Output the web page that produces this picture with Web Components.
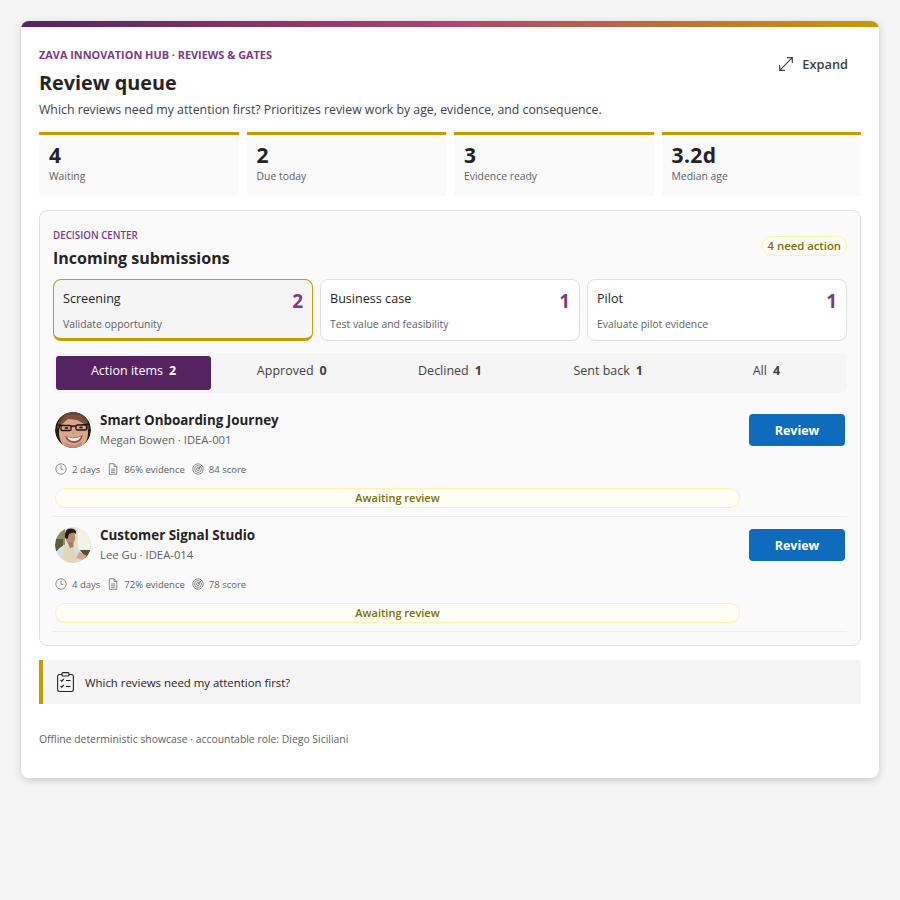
<!DOCTYPE html>
<html lang="en"><head><meta charset="utf-8"><title>Review queue</title>
<style>
html,body{margin:0;padding:0;background:#f5f5f5;}
body{font-family:"Open Sans","Noto Sans",sans-serif;color:#242424;}
</style></head><body>
<review-app></review-app>
<script>
const FONT='"Open Sans","Noto Sans",sans-serif';
const icons={
clock:'<svg width="12" height="12" viewBox="0 0 12 12" fill="none" stroke="#707070" stroke-width=".8"><circle cx="6" cy="6" r="5.2"/><path d="M6 2.800V6.300H8.400"/></svg>',
doc:'<svg width="12" height="12" viewBox="0 0 12 12" fill="none" stroke="#707070" stroke-width=".8"><path d="M2.400.7H7L9.800 3.500V11.300H2.400Z"/><path d="M7 .7V3.500H9.800M4 6H8.200M4 7.700H8.200M4 9.400H8.200"/></svg>',
score:'<svg width="12" height="12" viewBox="0 0 12 12" fill="none" stroke="#707070" stroke-width=".8"><circle cx="6" cy="6" r="5.200"/><circle cx="6" cy="6" r="3.400"/><circle cx="6" cy="6" r="1.500"/><path d="M6 6 10 2"/></svg>'
};
const avatars={
megan:`<svg width="36" height="36" viewBox="0 0 36 36"><defs><clipPath id="c"><circle cx="18" cy="18" r="18"/></clipPath><filter id="b" x="-10%" y="-10%" width="120%" height="120%"><feGaussianBlur stdDeviation=".7"/></filter></defs><g clip-path="url(#c)"><rect width="36" height="36" fill="#241812"/><g filter="url(#b)"><path d="M2 18C2 6 10 0 19 0S35 6 34 18L30 11 22 6 10 7 6 12Z" fill="#6a452f"/><ellipse cx="18.500" cy="21" rx="14.500" ry="17" fill="#d9a68b"/><path d="M5 10 12 3 25 3 32 10 31 13 22 8 13 7 6 13Z" fill="#7a5238"/><path d="M10 30Q19 36 27 29V36H10Z" fill="#c68e76"/><path d="M10 24Q19 28 28 23Q26 31 19 31Q12 31 10 24Z" fill="#9c4a48"/><path d="M12 25Q19 27.500 26 24.500Q24 29 19 29Q14 29 12 25Z" fill="#f7f2ec"/><path d="M3 13 16 14.500M21 14.500 34 12M16 14.500Q18.500 13.500 21 14.500" stroke="#1f1411" stroke-width="1.400" fill="none"/><rect x="6" y="13.500" width="10" height="5" rx="1.200" fill="#d8ab92" stroke="#1f1411" stroke-width="1.300"/><rect x="21" y="13" width="10.500" height="5" rx="1.200" fill="#d8ab92" stroke="#1f1411" stroke-width="1.300"/><ellipse cx="11.500" cy="16" rx="2" ry="1.100" fill="#33201a"/><ellipse cx="26" cy="15.500" rx="2" ry="1.100" fill="#33201a"/><path d="M18 19 17 22H20Z" fill="#c99479"/></g></g></svg>`,
lee:`<svg width="36" height="36" viewBox="0 0 36 36"><defs><clipPath id="d"><circle cx="18" cy="18" r="18"/></clipPath><filter id="e" x="-10%" y="-10%" width="120%" height="120%"><feGaussianBlur stdDeviation=".6"/></filter></defs><g clip-path="url(#d)"><rect width="36" height="36" fill="#e4e0cc"/><g filter="url(#e)"><rect x="23" width="13" height="24" fill="#f4f1e6"/><rect x="0" width="10" height="18" fill="#8f8c66"/><rect x="0" y="12" width="8" height="12" fill="#5d5a3c"/><rect x="25" y="23" width="11" height="13" fill="#564d3e"/><path d="M0 36V27Q4 19 11 18L20 20Q27 23 30 31L32 36Z" fill="#d5deea"/><path d="M6 36 9 20 13 18 19 21 24 36Z" fill="#e2d6ba"/><path d="M24 25 32 29 28 33 21 31Z" fill="#d4a587"/><ellipse cx="15.500" cy="10.500" rx="4.800" ry="6.500" fill="#b98a6e"/><path d="M10 11Q9 1.500 15.500 1.500Q22 1.500 21 7L18 5.500 14 7 12.500 12Z" fill="#201d1a"/><path d="M12.500 15.500H18.500V20L15 21Z" fill="#a87a60"/></g></g></svg>`
};
function define(name,css,html){
  const t=document.createElement('template');
  t.innerHTML=`<style>:host{box-sizing:border-box;font-family:${FONT}}*{box-sizing:border-box}${css}</style>${html}`;
  customElements.define(name,class extends HTMLElement{
    constructor(){super();this.attachShadow({mode:'open'}).appendChild(t.content.cloneNode(true));}
    connectedCallback(){
      this.shadowRoot.querySelectorAll('[data-a]').forEach(n=>{n.textContent=this.getAttribute(n.dataset.a)||'';});
    }
  });
}
define('metric-tile',`:host{display:block;height:64px;background:#fafafa;border-top:3px solid #c89b00;padding:8px 10px 0}
.v{font-size:21px;line-height:24px;font-weight:700;letter-spacing:.4px;color:#242424}
.l{font-size:10.400px;line-height:15px;color:#616161;margin-top:2px}`,
`<div class="v" data-a="value"></div><div class="l" data-a="label"></div>`);
define('stage-card',`:host{display:block;height:62px;background:#fff;border:1px solid #e0e0e0;border-radius:8px;padding:10px 9px 0;position:relative}
:host([active]){background:#f5f5f5;border-color:#c89b00;border-bottom:3px solid #c89b00}
.top{display:flex;justify-content:space-between}
.n{font-size:12.600px;line-height:18px;color:#242424}
.c{font-size:19px;line-height:23px;font-weight:700;color:#7b3a86}
.s{font-size:10.400px;line-height:14px;color:#616161;position:absolute;left:9px;top:37px}`,
`<div class="top"><span class="n" data-a="name"></span><span class="c" data-a="count"></span></div><div class="s" data-a="sub"></div>`);
define('filter-tab',`:host{display:flex;align-items:center;justify-content:center;gap:6px;height:34px;padding-bottom:6px;border-radius:3px;font-size:12.500px;color:#424242}
:host([active]){background:#55235f;color:#fff}
b{font-weight:700}`,
`<span data-a="label"></span><b data-a="count"></b>`);
define('meta-item',`:host{display:inline-flex;align-items:center;gap:5px;font-size:9.500px;color:#616161}
.i{display:flex}`,`<span class="i"><slot></slot></span><span data-a="text"></span>`);
define('queue-row',`:host{display:grid;grid-template-columns:1fr 96px;column-gap:9px;height:115px;padding:10px 2px 0;border-bottom:1px solid #ededed}
.who{display:flex;gap:9px}
.av{width:36px;height:36px;border-radius:50%;overflow:hidden;flex:none}
.t{font-size:13.400px;line-height:18px;font-weight:700;color:#242424;margin-top:-1px}
.p{font-size:11.300px;line-height:16px;color:#616161;margin-top:3px}
.m{display:flex;gap:7px;margin-top:12px;height:18px;align-items:center}
.pill{margin-top:10px;height:20px;border:1px solid #fdf3a8;background:#fffef5;border-radius:10px;font-size:11px;font-weight:600;line-height:18px;text-align:center;color:#7a7100}
button{height:32px;margin-top:2px;border:0;border-radius:4px;background:#0f6cbd;color:#fff;font:700 12.500px ${FONT}}`,
`<div><div class="who"><div class="av"><slot name="avatar"></slot></div><div><div class="t" data-a="title"></div><div class="p" data-a="person"></div></div></div><div class="m"><slot></slot></div><div class="pill">Awaiting review</div></div><button>Review</button>`);
define('decision-panel',`:host{display:block;height:436px;margin-top:14px;background:#fafafa;border:1px solid #e0e0e0;border-radius:8px;padding:18px 13px 0}
.h{display:flex;justify-content:space-between;align-items:flex-start;height:50px}
.e{font-size:9.800px;line-height:13px;font-weight:600;color:#7b3a86}
.t{font-size:16px;line-height:22px;font-weight:700;margin-top:5px;color:#242424}
.b{margin-top:7px;height:20px;padding:0 5px;border:1px solid #fdf3a8;background:#fffef5;border-radius:10px;font-size:11.300px;line-height:18px;font-weight:600;color:#7a7100}
.s{display:grid;grid-template-columns:repeat(3,1fr);gap:7px}
.f{display:grid;grid-template-columns:repeat(5,1fr);gap:3px;margin-top:12px;padding:3px;height:40px;background:#f5f5f5;border-radius:6px}
.r{margin-top:9px}`,
`<div class="h"><div><div class="e">DECISION CENTER</div><div class="t">Incoming submissions</div></div><div class="b">4 need action</div></div>
<div class="s"><slot name="stages"></slot></div><div class="f"><slot name="tabs"></slot></div><div class="r"><slot></slot></div>`);
define('review-app',`:host{display:block;width:858px;height:757px;margin:21px;background:#fff;border-radius:8px;box-shadow:0 2px 8px rgba(0,0,0,.18);overflow:hidden}
.bar{height:6px;background:linear-gradient(90deg,#55235f,#b0446f 50%,#c89b00)}
.in{padding:0 18px}
.head{display:flex;justify-content:space-between;height:105px}
.e{font-size:10.900px;line-height:14px;font-weight:700;color:#7b3a86;padding-top:21px}
h1{margin:8px 0 0;font-size:19.800px;line-height:26px;font-weight:700;color:#242424}
.d{font-size:12.300px;line-height:17px;color:#424242;margin-top:5px}
.x{display:flex;align-items:center;gap:9px;height:32px;margin:21px 13px 0 0;font-size:12.800px;font-weight:600;color:#424242}
.g{display:grid;grid-template-columns:repeat(4,1fr);gap:8px}
.q{display:flex;align-items:center;gap:11px;height:44px;margin-top:14px;background:#f5f5f5;border-left:4px solid #c89b00;padding-left:14px;font-size:11.400px;color:#242424}
.o{font-size:10.400px;line-height:14px;color:#616161;margin-top:28px}`,
`<div class="bar"></div><div class="in"><div class="head"><div><div class="e">ZAVA INNOVATION HUB · REVIEWS &amp; GATES</div><h1>Review queue</h1><div class="d">Which reviews need my attention first? Prioritizes review work by age, evidence, and consequence.</div></div>
<div class="x"><svg width="14" height="14" viewBox="0 0 14 14" fill="none" stroke="#424242" stroke-width="1.200"><path d="M8 .7H13.300V6M13.300 .7 .7 13.300M.7 8V13.300H6"/></svg>Expand</div></div>
<div class="g"><slot name="metrics"></slot></div><slot name="panel"></slot>
<div class="q"><svg width="17" height="20" viewBox="0 0 17 20" fill="none" stroke="#242424" stroke-width="1.100"><rect x=".6" y="2.500" width="15.800" height="17" rx="2"/><rect x="5" y=".6" width="7" height="3.400" rx="1" fill="#f5f5f5"/><path d="M3.500 8 4.700 9.200 6.800 7M3.500 14 4.700 15.200 6.800 13M9 8.500H13.500M9 14.500H13.500"/></svg><span>Which reviews need my attention first?</span></div>
<div class="o">Offline deterministic showcase · accountable role: Diego Siciliani</div></div>`);
const meta=(a,b,c)=>`<meta-item text="${a}">${icons.clock}</meta-item><meta-item text="${b}">${icons.doc}</meta-item><meta-item text="${c}">${icons.score}</meta-item>`;
document.querySelector('review-app').innerHTML=`
<metric-tile slot="metrics" value="4" label="Waiting"></metric-tile>
<metric-tile slot="metrics" value="2" label="Due today"></metric-tile>
<metric-tile slot="metrics" value="3" label="Evidence ready"></metric-tile>
<metric-tile slot="metrics" value="3.2d" label="Median age"></metric-tile>
<decision-panel slot="panel">
<stage-card slot="stages" active name="Screening" count="2" sub="Validate opportunity"></stage-card>
<stage-card slot="stages" name="Business case" count="1" sub="Test value and feasibility"></stage-card>
<stage-card slot="stages" name="Pilot" count="1" sub="Evaluate pilot evidence"></stage-card>
<filter-tab slot="tabs" active label="Action items" count="2"></filter-tab>
<filter-tab slot="tabs" label="Approved" count="0"></filter-tab>
<filter-tab slot="tabs" label="Declined" count="1"></filter-tab>
<filter-tab slot="tabs" label="Sent back" count="1"></filter-tab>
<filter-tab slot="tabs" label="All" count="4"></filter-tab>
<queue-row title="Smart Onboarding Journey" person="Megan Bowen · IDEA-001"><span slot="avatar">${avatars.megan}</span>${meta('2 days','86% evidence','84 score')}</queue-row>
<queue-row title="Customer Signal Studio" person="Lee Gu · IDEA-014"><span slot="avatar">${avatars.lee}</span>${meta('4 days','72% evidence','78 score')}</queue-row>
</decision-panel>`;
</script></body></html>
